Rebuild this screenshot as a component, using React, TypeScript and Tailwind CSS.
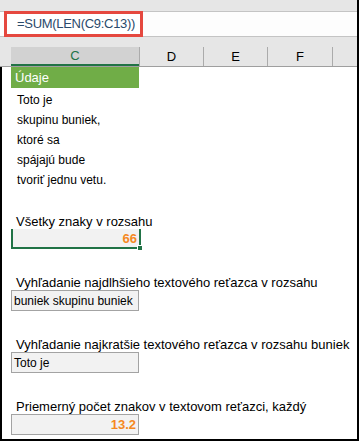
import React from "react";

const font = "font-['Liberation_Sans',Arial,sans-serif]";

function DataRow({ text }: { text: string }) {
  return (
    <div className="flex h-[20px] items-end pl-[15px] pb-[2px] text-[12px] leading-none text-black">
      {text}
    </div>
  );
}

function Label({ text, h = "h-[21px]" }: { text: string; h?: string }) {
  return (
    <div className={`flex ${h} items-end whitespace-nowrap pl-[14px] pb-[1px] text-[13px] leading-none text-black`}>
      {text}
    </div>
  );
}

function ResultBox({ children, right = false }: { children: React.ReactNode; right?: boolean }) {
  return (
    <div className="pl-[11px]">
      <div
        className={`flex h-[21px] w-[128px] items-center border border-[#a3a3a3] bg-[#f2f2f2] px-[2px] text-[12px] leading-none ${
          right ? "justify-end font-bold text-[#f5891f] text-[13px]" : "justify-start text-black"
        }`}
      >
        {children}
      </div>
    </div>
  );
}

export default function App() {
  const rows = ["Toto je", "skupinu buniek,", "ktoré sa", "spájajú bude", "tvoriť jednu vetu."];

  return (
    <div className={`${font} flex h-[441px] w-[359px] flex-col overflow-hidden border-r-2 border-b-2 border-black bg-white`}>
      {/* top strip */}
      <div className="h-[11px] shrink-0 bg-[#e6e6e6]" />

      {/* formula bar */}
      <div className="flex h-[26px] shrink-0 border-y border-[#c4c4c4] bg-[#fdfdfd] pl-[4px]">
        <div className="-my-px flex w-[139px] items-center border-[3px] border-[#e5483f] bg-white pl-[10px] text-[13px] tracking-[-0.3px] text-[#2a4a6b]">
          =SUM(LEN(C9:C13))
        </div>
      </div>

      {/* column headers */}
      <div className="flex h-[30px] shrink-0 border-b border-[#9f9f9f] bg-[#e6e6e6] pt-[10px] text-[13px] leading-none">
        <div className="w-[11px]" />
        <div className="flex w-[128px] items-center justify-center border-b-2 border-[#217346] bg-[#d2d2d2] text-[#217346]">
          C
        </div>
        <div className="flex w-[64px] items-center justify-center border-l border-[#ababab] text-black">D</div>
        <div className="flex w-[64px] items-center justify-center border-l border-[#ababab] text-black">E</div>
        <div className="flex w-[65px] items-center justify-center border-l border-[#ababab] text-black">F</div>
        <div className="flex-1 border-l border-[#ababab]" />
      </div>

      {/* sheet body */}
      <div className="flex flex-1 flex-col border-l-2 border-black">
        <div className="pl-[9px]">
          <div className="flex h-[21px] w-[128px] items-center pl-[4px] text-[13px] leading-none text-white bg-[#70ad47]">
            Údaje
          </div>
        </div>
        {rows.map((r) => (
          <DataRow key={r} text={r} />
        ))}

        <div className="h-[20px]" />
        <Label text="Všetky znaky v rozsahu" />
        <div className="pl-[9px]">
          <div className="relative flex h-[20px] w-[130px] items-center justify-end border-x-2 border-b-2 border-[#217346] bg-[#f2f2f2] pr-[2px] text-[13px] font-bold leading-none text-[#f5891f]">
            66
            <div className="absolute -right-[4px] -bottom-[4px] h-[6px] w-[6px] border border-white bg-[#217346]" />
          </div>
        </div>

        <div className="h-[20px]" />
        <Label text="Vyhľadanie najdlhšieho textového reťazca v rozsahu" />
        <div className="-ml-[2px]">
          <ResultBox>buniek skupinu buniek</ResultBox>
        </div>

        <div className="h-[21px]" />
        <Label text="Vyhľadanie najkratšie textového reťazca v rozsahu buniek" h="h-[20px]" />
        <div className="-ml-[2px]">
          <ResultBox>Toto je</ResultBox>
        </div>

        <div className="h-[21px]" />
        <Label text="Priemerný počet znakov v textovom reťazci, každý" h="h-[20px]" />
        <div className="-ml-[2px]">
          <ResultBox right>13.2</ResultBox>
        </div>
      </div>
    </div>
  );
}
